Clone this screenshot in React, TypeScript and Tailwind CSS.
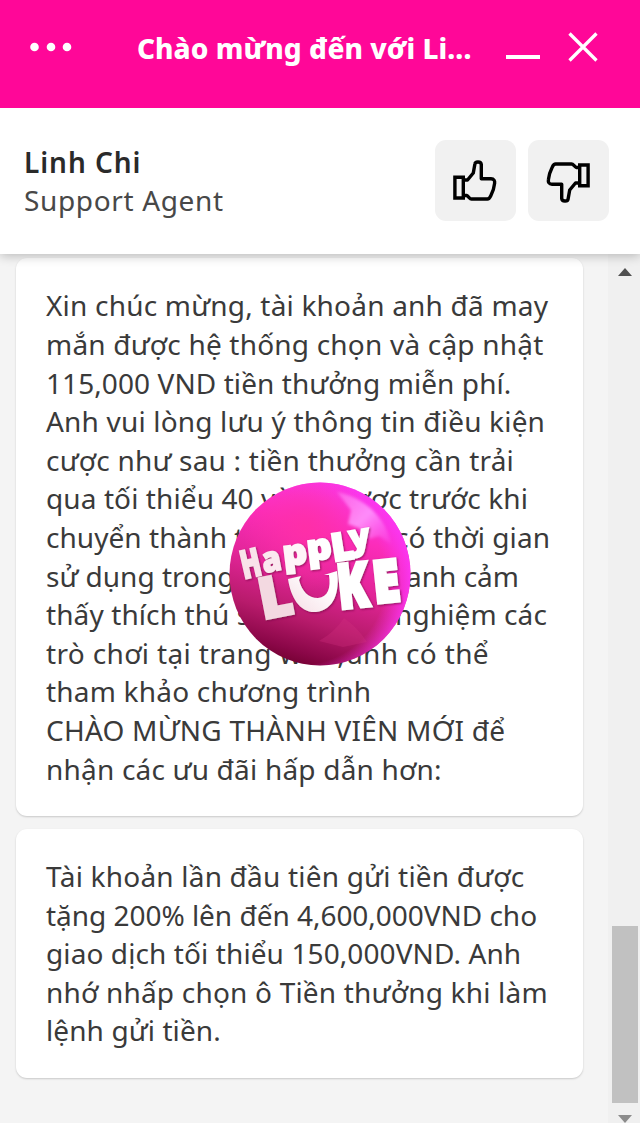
import React from 'react';

type Row = { parts: string[]; cls: string };

const first: Row[] = [
  { parts: ['Xin chúc mừng, tài khoản anh đã may'], cls: 'w-[503px] tracking-[0.2px]' },
  { parts: ['mắn được hệ thống chọn và cập nhật'], cls: 'w-[499px] tracking-[0.2px]' },
  { parts: ['115,000 VND tiền thưởng miễn phí.'], cls: 'w-[465px] tracking-[0.08px]' },
  { parts: ['Anh vui lòng lưu ý thông tin điều kiện'], cls: 'w-[500px] tracking-[0.18px]' },
  { parts: ['cược như sau : tiền thưởng cần trải'], cls: 'w-[469px] tracking-[0.22px]' },
  { parts: ['qua tối thiểu 40 vò', 'ng', 'ược trước khi'], cls: 'w-[482px] tracking-[0.1px]' },
  { parts: ['chuyển thành t', 'iền mặt', 'có thời gian'], cls: 'w-[504px] tracking-[0.05px]' },
  { parts: ['sử dụng trong', '7 ngày', 'anh cảm'], cls: 'w-[473px] tracking-[0px]' },
  { parts: ['thấy thích thú s', 'au khi', 'nghiệm các'], cls: 'w-[501px] tracking-[0.1px]' },
  { parts: ['trò chơi tại trang w', 'eb,', 'anh có thể'], cls: 'w-[443px] tracking-[0.35px]' },
  { parts: ['tham khảo chương trình'], cls: 'w-[326px] tracking-[0.2px]' },
  { parts: ['CHÀO MỪNG THÀNH VIÊN MỚI để'], cls: 'w-[460px] tracking-[0.24px]' },
  { parts: ['nhận các ưu đãi hấp dẫn hơn:'], cls: 'w-[396px] tracking-[0.2px]' },
];

const second: Row[] = [
  { parts: ['Tài khoản lần đầu tiên gửi tiền được'], cls: 'w-[480px] tracking-[0.2px]' },
  { parts: ['tặng 200% lên đến 4,600,000VND cho'], cls: 'w-[492px] tracking-[-0.03px]' },
  { parts: ['giao dịch tối thiểu 150,000VND. Anh'], cls: 'w-[476px] tracking-[0.1px]' },
  { parts: ['nhớ nhấp chọn ô Tiền thưởng khi làm'], cls: 'w-[503px] tracking-[0.2px]' },
  { parts: ['lệnh gửi tiền.'], cls: 'w-[174px] tracking-[0.1px]' },
];

function Lines({ rows }: { rows: Row[] }) {
  return (
    <>
      {rows.map((r) => (
        <p key={r.parts[0]} className={`flex h-[38.6px] justify-between whitespace-nowrap ${r.cls}`}>
          {r.parts.map((t) => (
            <span key={t}>{t}</span>
          ))}
        </p>
      ))}
    </>
  );
}

function Thumb({ down = false }: { down?: boolean }) {
  return (
    <svg width="44" height="44" viewBox="0 0 44 44" fill="none" stroke="#000" strokeWidth="3.4" strokeLinejoin="round" className={down ? '-ml-[2px] mt-[2px] rotate-180' : '-ml-[1px] mt-[1px]'}>
      <path d="M1.900 18.200h8.400V39H1.900z" strokeLinejoin="miter" />
      <path d="M10.300 21h4.200l5.800-7 1.600-9c.4-2.800 6-2.800 6.400.500v14.300h9.700c3 0 4 2 3.600 4.500-.5 5-2 9-3.800 12.500-.7 1.500-1.800 3.200-3.400 3.200H18.500c-2 0-3-3-5-3.500h-3" />
    </svg>
  );
}

function Ball() {
  return (
    <svg className="absolute left-[229px] top-[482px]" width="183" height="185" viewBox="0 0 183 185">
      <defs>
        <linearGradient id="base" x1=".65" y1="0" x2=".35" y2="1">
          <stop offset="0" stopColor="#fb3cf0" />
          <stop offset=".28" stopColor="#fb2cb9" />
          <stop offset=".52" stopColor="#e22598" />
          <stop offset=".75" stopColor="#b81b6c" />
          <stop offset=".92" stopColor="#8b0748" />
          <stop offset="1" stopColor="#720030" />
        </linearGradient>
        <radialGradient id="rim" cx=".4" cy=".53" r=".61">
          <stop offset=".76" stopColor="#fa30e8" stopOpacity="0" />
          <stop offset="1" stopColor="#fb36f2" />
        </radialGradient>
        <radialGradient id="glow" cx=".42" cy=".25" r=".35">
          <stop offset="0" stopColor="#ff2fa6" stopOpacity=".9" />
          <stop offset="1" stopColor="#ff2fa6" stopOpacity="0" />
        </radialGradient>
        <linearGradient id="shine" x1="0" y1="0" x2="1" y2="1">
          <stop offset="0" stopColor="#ff8df7" stopOpacity=".5" />
          <stop offset=".5" stopColor="#ff9bff" stopOpacity=".85" />
          <stop offset="1" stopColor="#ff60f5" stopOpacity=".2" />
        </linearGradient>
        <linearGradient id="smile" x1="0" y1="1" x2="1" y2="0">
          <stop offset="0" stopColor="#f5dce4" />
          <stop offset=".7" stopColor="#fff" />
        </linearGradient>
        <filter id="soft"><feGaussianBlur stdDeviation="1.8" /></filter>
        <filter id="shade" x="-10%" y="-10%" width="120%" height="120%">
          <feDropShadow dx="1" dy="1" stdDeviation="0.8" floodColor="#7d0a4c" floodOpacity=".8" />
        </filter>
      </defs>
      <ellipse cx="91" cy="92" rx="90.500" ry="91.500" fill="url(#base)" />
      <ellipse cx="91" cy="92" rx="90.500" ry="91.500" fill="url(#rim)" />
      <ellipse cx="91" cy="92" rx="90.500" ry="91.500" fill="url(#glow)" />
      <path d="M108 10C137 16 157 36 162 62L150 54 140 57 130 46 119 42 122 28Z" fill="url(#shine)" filter="url(#soft)" />
      <path d="M90 159Q106 150 115 136Q128 145 138 160L114 165Z" fill="#d33180" opacity=".3" />
      <g fontFamily="'Open Sans', 'Noto Sans', sans-serif" fontWeight="800" strokeLinejoin="miter" filter="url(#shade)">
        <text transform="translate(15 97) rotate(-13) scale(.66 1)" fontSize="39" fill="#f9e3ea" stroke="#f9e3ea" strokeWidth="2">H</text>
        <text transform="translate(35 91) rotate(-11) scale(.88 1)" fontSize="35" fill="#fbe8ef" stroke="#fbe8ef" strokeWidth="1.500">a</text>
        <text transform="translate(55 84) rotate(-7) scale(1 .92)" fontSize="38" fill="#fff4f8" stroke="#fff4f8" strokeWidth="2">p</text>
        <text transform="translate(79 79) rotate(-7) scale(1 .92)" fontSize="39" fill="#fff" stroke="#fff" strokeWidth="2">p</text>
        <text transform="translate(105 79) rotate(-9) scale(.96 1)" fontSize="37" fill="#fff" stroke="#fff" strokeWidth="3.500">L</text>
        <text transform="translate(122 68) rotate(-9) scale(.98 1)" fontSize="34" fill="#fff" stroke="#fff" strokeWidth="2">y</text>
        <text transform="translate(34 137) rotate(-11) scale(1 1)" fontSize="56" fill="#f3d9e1" stroke="#f3d9e1" strokeWidth="3.500">L</text>
        <path d="M59 97l13-3-2 4c3 11 9 18 19 18 10-1 13-10 11-23h-5l13-4c3 21-3 39-21 41-16 1-25-14-28-33z" fill="url(#smile)" />
        <text transform="translate(110.500 127) rotate(-6) scale(.74 1)" fontSize="62" fill="#fff" stroke="#fff" strokeWidth="3.500">K</text>
        <text transform="translate(146 121) rotate(-6) scale(.83 1)" fontSize="58" fill="#fff" stroke="#fff" strokeWidth="4">E</text>
      </g>
    </svg>
  );
}

export default function App() {
  return (
    <div className="relative flex h-[1123px] w-[640px] flex-col overflow-hidden bg-[#f4f4f4] font-['Noto_Sans','Open_Sans',sans-serif] text-[#3a3a3a]">
      <header className="relative z-20 flex h-[108px] shrink-0 bg-[#ff0798] text-white">
        <svg className="ml-[29px] mt-[42px]" width="44" height="10" viewBox="0 0 44 10" fill="#fff">
          <circle cx="5.500" cy="5" r="4.300" /><circle cx="22" cy="5" r="4.300" /><circle cx="38" cy="5" r="4.300" />
        </svg>
        <h1 className="ml-[64px] mt-[28px] h-10 w-[370px] whitespace-nowrap text-[28px] font-extrabold leading-10 tracking-[0.05px]">Chào mừng đến với Li...</h1>
        <div className="-ml-[1px] mt-[55px] h-[4px] w-[34px] bg-white" />
        <svg className="ml-[28px] mt-[32px]" width="30" height="30" viewBox="0 0 30 30" stroke="#fff" strokeWidth="3.300">
          <path d="M1.500 1.500l27 27M28.500 1.500l-27 27" />
        </svg>
      </header>
      <section className="relative z-10 flex h-[146px] shrink-0 justify-between bg-white pl-6 pr-[31px] shadow-[0_2px_10px_rgba(0,0,0,0.24)]">
        <div className="pt-[35px]">
          <p className="text-[28px] font-semibold leading-[38px] tracking-[0.95px] text-[#2a2a2a]">Linh Chi</p>
          <p className="text-[28px] leading-[38px] tracking-[0.65px] text-[#484848]">Support Agent</p>
        </div>
        <div className="mt-8 flex gap-3">
          <button className="flex size-[81px] items-center justify-center rounded-[11px] bg-[#f1f1f1]"><Thumb /></button>
          <button className="flex size-[81px] items-center justify-center rounded-[11px] bg-[#f1f1f1]"><Thumb down /></button>
        </div>
      </section>
      <main className="flex min-h-0 flex-1 justify-between pl-4">
        <div className="flex w-[567px] flex-col text-[28px] leading-[38.6px]">
          <article className="mt-1 h-[558px] shrink-0 rounded-[11px] bg-white pl-[30px] pt-[28.4px] shadow-[0_1px_2px_rgba(0,0,0,0.18)]"><Lines rows={first} /></article>
          <article className="mt-[13px] h-[249px] shrink-0 rounded-[11px] bg-white pl-[30px] pt-[28px] shadow-[0_1px_2px_rgba(0,0,0,0.18)]"><Lines rows={second} /></article>
        </div>
        <div className="flex w-[32px] flex-col items-center bg-[#f0f0f0]">
          <svg className="ml-[2px] mt-[13px] shrink-0" width="16" height="10" viewBox="0 0 16 10"><path d="M8 1l7 8H1z" fill="#505050" /></svg>
          <div className="ml-[2px] mt-[649px] h-[177px] w-[26px] shrink-0 bg-[#c1c1c1]" />
          <svg className="ml-[2px] mt-[12px] shrink-0" width="16" height="10" viewBox="0 0 16 10"><path d="M1 0h14L8 8z" fill="#8c8c8c" /></svg>
        </div>
      </main>
      <Ball />
    </div>
  );
}
